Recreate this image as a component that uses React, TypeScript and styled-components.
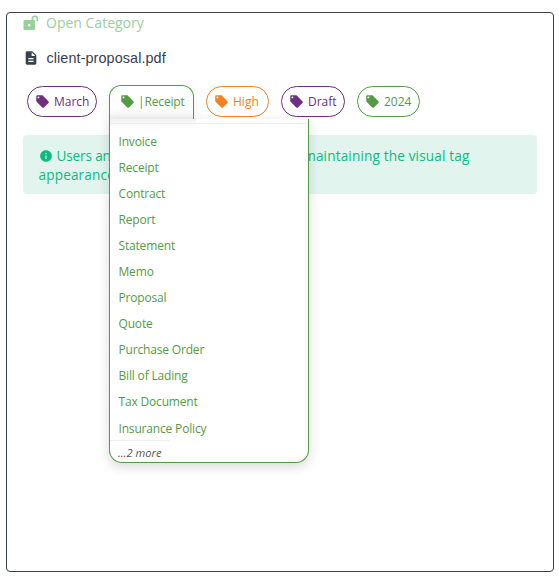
import React from "react";
import styled, { createGlobalStyle } from "styled-components";

const GlobalStyle = createGlobalStyle`
  * { box-sizing: border-box; }
  body { margin: 0; background: #fff; font-family: "Open Sans", "Noto Sans", sans-serif; }
`;

const Frame = styled.main`
  margin: 12px 0 0 6px;
  width: 548px;
  height: 560px;
  border: 1px solid #374151;
  border-radius: 4px;
  padding: 0 16px;
`;

const CategoryRow = styled.div`
  display: flex;
  align-items: center;
  height: 20px;
  gap: 7px;
  color: #98d19b;
  font-size: 14px;
  line-height: 20px;
`;

const FileRow = styled.div`
  display: flex;
  align-items: center;
  height: 20px;
  margin-top: 15px;
  gap: 7.5px;
  color: #374151;
  font: 14.4px/20px "Liberation Sans", Arial, sans-serif;
  letter-spacing: 0.09px;
`;

const IconSlot = styled.span`
  display: flex;
  width: 16px;
  height: 16px;
`;

const Tags = styled.div`
  display: flex;
  gap: 12px;
  height: 34px;
  margin: 17px 0 0 4px;
`;

const Tag = styled.div<{ $color: string; $width: number; $open?: boolean }>`
  position: relative;
  display: flex;
  align-items: center;
  gap: 4px;
  width: ${(p) => p.$width}px;
  height: ${(p) => (p.$open ? 34 : 31)}px;
  margin-top: ${(p) => (p.$open ? 0 : 1)}px;
  padding: 0 0 ${(p) => (p.$open ? 2 : 0)}px ${(p) => (p.$open ? 10 : 7)}px;
  border: 1px solid ${(p) => p.$color};
  border-bottom-width: ${(p) => (p.$open ? 0 : 1)}px;
  border-radius: ${(p) => (p.$open ? "12px 12px 0 0" : "16px")};
  color: ${(p) => p.$color};
  font-size: 12px;
  white-space: nowrap;
  background: ${(p) => (p.$open ? "linear-gradient(to top, rgba(0,0,0,.06), transparent 11px)" : "none")};
  box-shadow: ${(p) => (p.$open ? "0 4px 12px rgba(0,0,0,.08)" : "none")};
`;

const Label = styled.span<{ $tight?: boolean }>`
  letter-spacing: ${(p) => (p.$tight ? "-0.15px" : "0")};
  margin-left: ${(p) => (p.$tight ? "-1px" : "0")};
`;

const Menu = styled.div`
  position: absolute;
  z-index: 2;
  top: 33px;
  left: -1px;
  width: 200px;
  height: 344px;
  padding-top: 4px;
  background: linear-gradient(to bottom, rgba(0,0,0,.05), transparent) 0 0 / 86px 10px no-repeat #fff;
  border: 1px solid #559b46;
  border-top: 0;
  border-radius: 0 0 13px 13px;
  box-shadow: 0 4px 12px rgba(0,0,0,.15);
`;

const Options = styled.ul`
  list-style: none;
  margin: 0;
  height: 317px;
  padding: 5px 0 0;
  border-top: 1px solid #eee;
`;

const Option = styled.li`
  height: 26.06px;
  padding-left: 8.5px;
  line-height: 26px;
  letter-spacing: -0.17px;
`;

const More = styled.div`
  width: 59px;
  padding-left: 8px;
  border-top: 1px solid #eee;
  color: #555;
  font-size: 11.2px;
  font-style: italic;
  line-height: 23px;
`;

const Notice = styled.div`
  height: 59px;
  margin-top: 16px;
  padding: 11px 16px 11px 15.5px;
  border-radius: 4px;
  background: #e1f5ee;
  color: #10b981;
  font-size: 13.6px;
  line-height: 19px;
`;

const NoticeLine = styled.div`
  display: flex;
  align-items: center;
  justify-content: space-between;
  width: 431px;
  white-space: nowrap;
  letter-spacing: 0.15px;
`;

const NoticeStart = styled.span`
  display: flex;
  align-items: center;
  gap: 4px;
  letter-spacing: -0.15px;
`;

const TagIcon = () => (
  <svg width="15" height="15" viewBox="0 0 24 24" fill="currentColor">
    <path d="M21.41 11.58l-9-9C12.05 2.22 11.55 2 11 2H4c-1.1 0-2 .9-2 2v7c0 .55.22 1.05.59 1.42l9 9c.36.36.86.58 1.41.58s1.05-.22 1.41-.59l7-7c.37-.36.59-.86.59-1.41s-.23-1.06-.59-1.42zM5.5 7C4.67 7 4 6.33 4 5.5S4.67 4 5.5 4 7 4.67 7 5.5 6.33 7 5.5 7z" />
  </svg>
);

const UnlockIcon = () => (
  <svg width="16" height="16" viewBox="0 0 16 16">
    <path d="M9.4 6V3.7a2.5 2.5 0 0 1 5 0V6" fill="none" stroke="currentColor" strokeWidth="1.6" />
    <path fillRule="evenodd" fill="currentColor" d="M1.6 5h9.3q1.1 0 1.1 1v8q0 1-1.1 1H1.6q-1.1 0-1.1-1V6q0-1 1.1-1zM5.1 9v2.2h2.2V9z" />
  </svg>
);

const FileIcon = () => (
  <svg width="16" height="16" viewBox="0 0 24 24" fill="currentColor">
    <path d="M14 2H6c-1.1 0-1.99.9-1.99 2L4 20c0 1.1.89 2 1.99 2H18c1.1 0 2-.9 2-2V8l-6-6zm2 16H8v-2h8v2zm0-4H8v-2h8v2zm-3-5V3.5L18.5 9H13z" />
  </svg>
);

const InfoIcon = () => (
  <svg width="14" height="14" viewBox="0 0 24 24" fill="currentColor">
    <path d="M12 2C6.48 2 2 6.48 2 12s4.48 10 10 10 10-4.48 10-10S17.52 2 12 2zm1 15h-2v-6h2v6zm0-8h-2V7h2v2z" />
  </svg>
);

const PURPLE = "#6f2f82";
const GREEN = "#559b46";
const ORANGE = "#f58220";

const options = [
  "Invoice", "Receipt", "Contract", "Report", "Statement", "Memo",
  "Proposal", "Quote", "Purchase Order", "Bill of Lading", "Tax Document", "Insurance Policy",
];

export default function App() {
  return (
    <>
      <GlobalStyle />
      <Frame>
        <CategoryRow><IconSlot><UnlockIcon /></IconSlot>Open Category</CategoryRow>
        <FileRow><IconSlot><FileIcon /></IconSlot>client-proposal.pdf</FileRow>
        <Tags>
          <Tag $color={PURPLE} $width={70}><TagIcon /><Label>March</Label></Tag>
          <Tag $color={GREEN} $width={85} $open>
            <TagIcon /><Label $tight>|Receipt</Label>
            <Menu>
              <Options>{options.map((o) => <Option key={o}>{o}</Option>)}</Options>
              <More>...2 more</More>
            </Menu>
          </Tag>
          <Tag $color={ORANGE} $width={63}><TagIcon /><Label>High</Label></Tag>
          <Tag $color={PURPLE} $width={64}><TagIcon /><Label>Draft</Label></Tag>
          <Tag $color={GREEN} $width={63}><TagIcon /><Label>2024</Label></Tag>
        </Tags>
        <Notice>
          <NoticeLine>
            <NoticeStart><InfoIcon />Users an</NoticeStart>
            <span>maintaining the visual tag</span>
          </NoticeLine>
          <NoticeLine>appearance</NoticeLine>
        </Notice>
      </Frame>
    </>
  );
}
